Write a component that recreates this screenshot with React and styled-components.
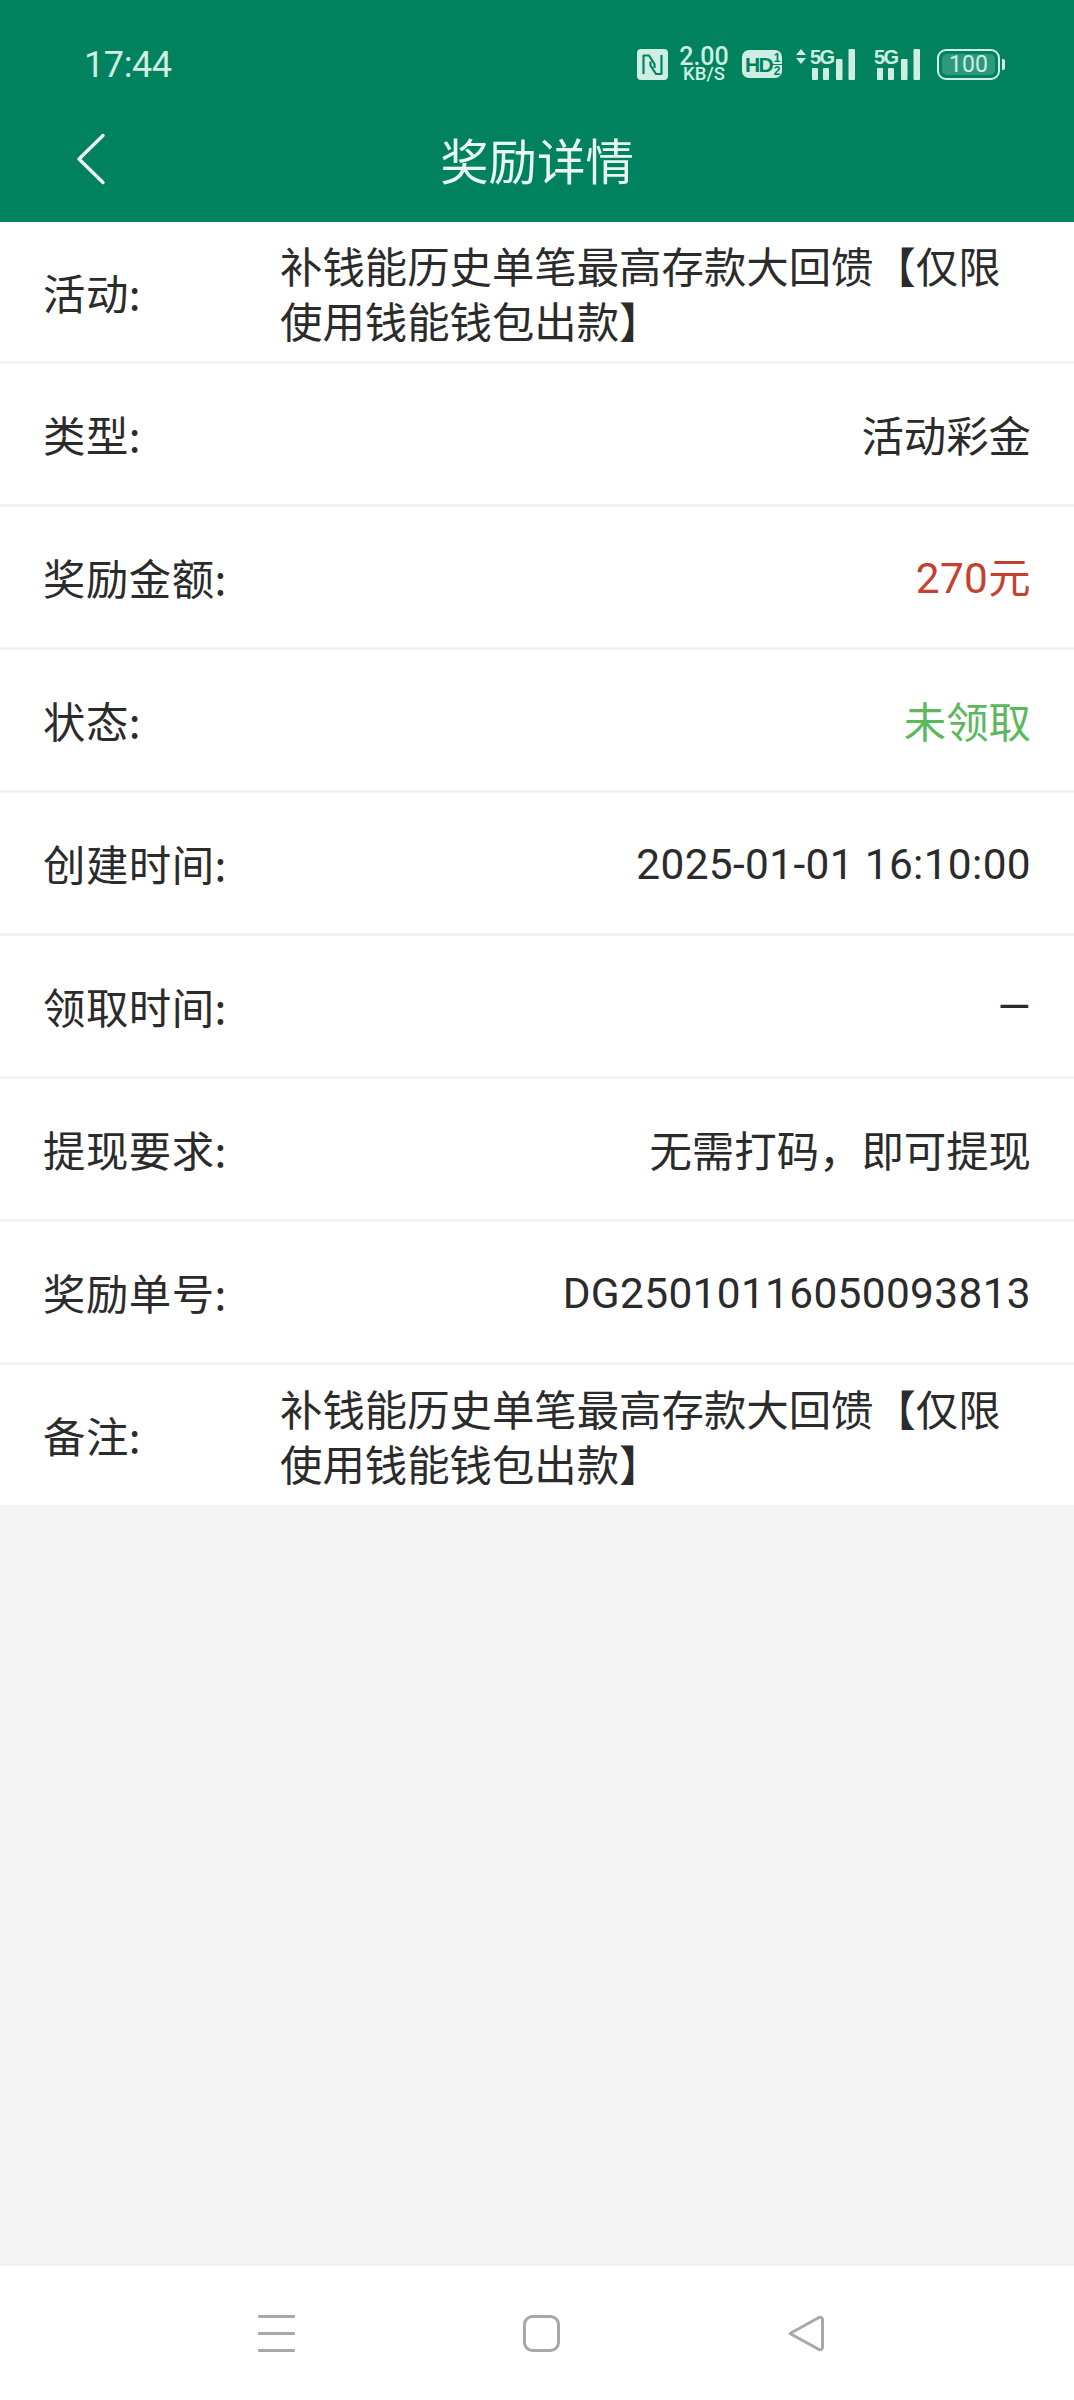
import React from "react";
import styled, { createGlobalStyle } from "styled-components";

const Global = createGlobalStyle`
  html, body { margin: 0; padding: 0; background: #f3f3f3; }
  * { box-sizing: border-box; }
`;

const CJK = `"Noto Sans CJK SC", "Noto Sans", sans-serif`;

const Page = styled.div`
  width: 1074px;
  height: 2400px;
  display: flex;
  flex-direction: column;
  background: #f3f3f3;
  font-family: ${CJK};
`;

const Header = styled.header`
  height: 222px;
  flex: none;
  background: #00825f;
  display: flex;
  flex-direction: column;
`;

const StatusBar = styled.div`
  height: 128px;
  padding: 0 69px 0 84px;
  display: flex;
  align-items: center;
  justify-content: space-between;
  color: #cfeee3;
`;

const Clock = styled.span`
  font-family: Roboto, sans-serif;
  font-size: 36px;
  letter-spacing: -0.4px;
  padding-top: 2px;
`;

const StatusIcons = styled.div`
  display: flex;
  align-items: center;
`;

const Speed = styled.div`
  display: flex;
  flex-direction: column;
  align-items: center;
  width: 50px;
  margin: 0 13px 0 11px;
  font-family: Roboto, sans-serif;
  font-weight: 500;
  line-height: 1;
`;

const SpeedValue = styled.span`
  font-size: 25px;
  height: 21px;
  line-height: 21px;
`;

const SpeedUnit = styled.span`
  font-size: 18.5px;
  height: 15px;
  line-height: 15px;
`;

const HdBadge = styled.div`
  width: 40px;
  height: 28px;
  border-radius: 7px;
  background: #cfeee3;
  color: #00825f;
  margin-right: 14px;
  padding: 0 2px 0 3px;
  display: flex;
  align-items: center;
  justify-content: space-between;
  font-family: "Liberation Sans", sans-serif;
  font-weight: 700;
`;

const HdText = styled.span`
  font-size: 21px;
  line-height: 1;
  letter-spacing: -1.6px;
`;

const HdFraction = styled.span`
  display: flex;
  flex-direction: column;
  align-items: center;
  width: 11px;
  font-size: 12px;
  line-height: 12px;
`;

const HdOver = styled.span`
  border-bottom: 1.5px solid #00825f;
  width: 10px;
  text-align: center;
`;

const SignalWrap = styled.div`
  position: relative;
  width: ${(p) => p.$w}px;
  height: 31px;
  margin-right: ${(p) => p.$mr}px;
  display: flex;
  justify-content: flex-end;
  align-items: flex-end;
`;

const SignalLabel = styled.span`
  position: absolute;
  left: ${(p) => p.$left}px;
  top: -2px;
  font-family: "Liberation Sans", sans-serif;
  font-weight: 700;
  font-size: 20px;
  line-height: 20px;
  letter-spacing: -1.6px;
`;

const Battery = styled.div`
  width: 63px;
  height: 31px;
  border: 2px solid #cfeee3;
  border-radius: 9px;
  padding: 3px;
  margin-right: 2px;
  display: flex;
`;

const BatteryFill = styled.div`
  flex: 1;
  border-radius: 5px;
  background: rgba(207, 238, 227, 0.22);
  display: flex;
  align-items: center;
  justify-content: center;
  font-family: Roboto, sans-serif;
  font-size: 23px;
  line-height: 1;
`;

const BatteryNub = styled.div`
  width: 3px;
  height: 11px;
  border-radius: 0 2px 2px 0;
  background: #cfeee3;
`;

const TitleBar = styled.div`
  flex: 1;
  position: relative;
  display: flex;
  align-items: center;
  justify-content: center;
  padding-bottom: 32px;
`;

const BackIcon = styled.svg`
  position: absolute;
  left: 76px;
  top: 5px;
`;

const Title = styled.h1`
  margin: 0;
  font-size: 48.4px;
  font-weight: 400;
  line-height: 1;
  color: #e9f7f2;
`;

const List = styled.main`
  background: #fff;
  flex: none;
`;

const Row = styled.div`
  height: ${(p) => p.$h}px;
  display: flex;
  align-items: center;
  justify-content: space-between;
  padding: 0 43px;
  border-bottom: ${(p) => (p.$last ? "none" : "3px solid #f3f3f3")};
  font-size: 42.4px;
  color: #2b2b2b;
`;

const Label = styled.div`
  flex: none;
  width: 237px;
  line-height: 54px;
  letter-spacing: 0.5px;
`;

const Value = styled.div`
  color: ${(p) => p.$color || "#2b2b2b"};
  line-height: 54.5px;
  white-space: nowrap;
  font-family: ${(p) => (p.$latin ? `Roboto, ${CJK}` : CJK)};
  letter-spacing: ${(p) => (p.$latin ? "0.35px" : "0")};
  padding-top: ${(p) => (p.$latin ? "4px" : "0")};
`;

const LongValue = styled.div`
  flex: 1;
  line-height: 55px;
`;

const Spacer = styled.div`
  flex: 1;
`;

const NavBar = styled.nav`
  height: 134px;
  flex: none;
  background: #fff;
  padding: 0 249px 0 258px;
  display: flex;
  align-items: center;
  justify-content: space-between;
`;

const NfcIcon = () => (
  <svg width="31" height="31" viewBox="0 0 31 31">
    <rect width="31" height="31" rx="4" fill="#cfeee3" />
    <path
      d="M6.5 25V6.5h5.5l5.5 8.5v4M24.5 6v19h-5.5l-5.5-8.5v-4"
      fill="none"
      stroke="#00825f"
      strokeWidth="2.2"
      strokeLinejoin="round"
    />
  </svg>
);

const Bars = () => (
  <svg width="43" height="31" viewBox="0 0 43 31" fill="#cfeee3">
    <rect x="0" y="19" width="6" height="12" rx="1" />
    <rect x="11" y="19" width="6" height="12" rx="1" />
    <rect x="24" y="10" width="6.5" height="21" rx="1" />
    <rect x="36.5" y="0" width="6.5" height="31" rx="1" />
  </svg>
);

const Arrows = styled.svg`
  position: absolute;
  left: 0;
  top: 0;
`;

const data = [
  { label: "类型:", value: "活动彩金" },
  { label: "奖励金额:", value: "270元", color: "#c4412f", latin: true },
  { label: "状态:", value: "未领取", color: "#5cb85c" },
  { label: "创建时间:", value: "2025-01-01 16:10:00", latin: true },
  { label: "领取时间:", value: "—", latin: true },
  { label: "提现要求:", value: "无需打码\uFF0C即可提现" },
  { label: "奖励单号:", value: "DG25010116050093813", latin: true },
];

const longText = "补钱能历史单笔最高存款大回馈【仅限使用钱能钱包出款】";

export default function App() {
  return (
    <Page>
      <Global />
      <Header>
        <StatusBar>
          <Clock>17:44</Clock>
          <StatusIcons>
            <NfcIcon />
            <Speed>
              <SpeedValue>2.00</SpeedValue>
              <SpeedUnit>KB/S</SpeedUnit>
            </Speed>
            <HdBadge>
              <HdText>HD</HdText>
              <HdFraction>
                <HdOver>1</HdOver>
                <span>2</span>
              </HdFraction>
            </HdBadge>
            <SignalWrap $w={59} $mr={19}>
              <Arrows width="10" height="15" viewBox="0 0 10 15" fill="#cfeee3">
                <path d="M5 0l5 6H0zM5 15L0 9h10z" />
              </Arrows>
              <SignalLabel $left={14}>5G</SignalLabel>
              <Bars />
            </SignalWrap>
            <SignalWrap $w={46} $mr={17}>
              <SignalLabel $left={0}>5G</SignalLabel>
              <Bars />
            </SignalWrap>
            <Battery>
              <BatteryFill>100</BatteryFill>
            </Battery>
            <BatteryNub />
          </StatusIcons>
        </StatusBar>
        <TitleBar>
          <BackIcon width="30" height="52" viewBox="0 0 30 52">
            <path
              d="M27 2.5L3 26l24 23.5"
              fill="none"
              stroke="#eef9f5"
              strokeWidth="3.4"
              strokeLinecap="round"
              strokeLinejoin="round"
            />
          </BackIcon>
          <Title>奖励详情</Title>
        </TitleBar>
      </Header>
      <List>
        <Row $h={142}>
          <Label>活动:</Label>
          <LongValue>{longText}</LongValue>
        </Row>
        {data.map((d) => (
          <Row key={d.label} $h={143}>
            <Label>{d.label}</Label>
            <Value $color={d.color} $latin={d.latin}>
              {d.value}
            </Value>
          </Row>
        ))}
        <Row $h={140} $last>
          <Label>备注:</Label>
          <LongValue>{longText}</LongValue>
        </Row>
      </List>
      <Spacer />
      <NavBar>
        <svg width="37" height="37" viewBox="0 0 37 37" fill="#a8a8a8">
          <rect y="0" width="37" height="3" rx="1" />
          <rect y="17" width="37" height="3" rx="1" />
          <rect y="34" width="37" height="3" rx="1" />
        </svg>
        <svg width="37" height="37" viewBox="0 0 37 37">
          <rect x="1.5" y="1.5" width="34" height="34" rx="8" fill="none" stroke="#a8a8a8" strokeWidth="3" />
        </svg>
        <svg width="38" height="37" viewBox="0 0 38 37">
          <path
            d="M3 18.5L32 2.5q3-1 3.5 2v28q-.5 3-3.5 2z"
            fill="none"
            stroke="#a8a8a8"
            strokeWidth="3"
            strokeLinejoin="round"
          />
        </svg>
      </NavBar>
    </Page>
  );
}
